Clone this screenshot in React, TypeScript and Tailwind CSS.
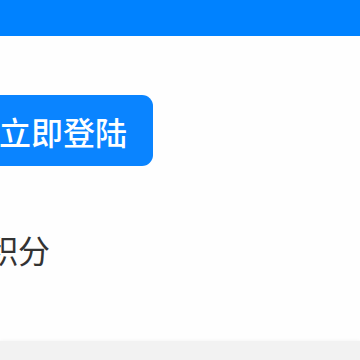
export default function App() {
    return (
        <div className="w-[360px] h-[360px] overflow-hidden bg-[#fefefe] flex flex-col" style={{ fontFamily: '"Noto Sans CJK SC", "Noto Sans", sans-serif' }}>
            {/* header bar */}
            <div className="h-[36px] bg-[#0082ff] shrink-0" />
            <div className="flex-1 flex flex-col">
                <div className="mt-[59px] ml-[-27px] self-start h-[71px] px-[26px] rounded-[11px] bg-[#0a84ff] text-white text-[32px] font-medium leading-none flex items-center">
                    立即登陆
                </div>
                <div className="mt-[67px] ml-[-14px] text-[32px] leading-none text-[#333]">
                    积分
                </div>
            </div>
            <div className="h-[19px] bg-[#f2f2f2] shrink-0 shadow-[0_-1px_3px_rgba(0,0,0,0.03)]" />
        </div>
    );
}
